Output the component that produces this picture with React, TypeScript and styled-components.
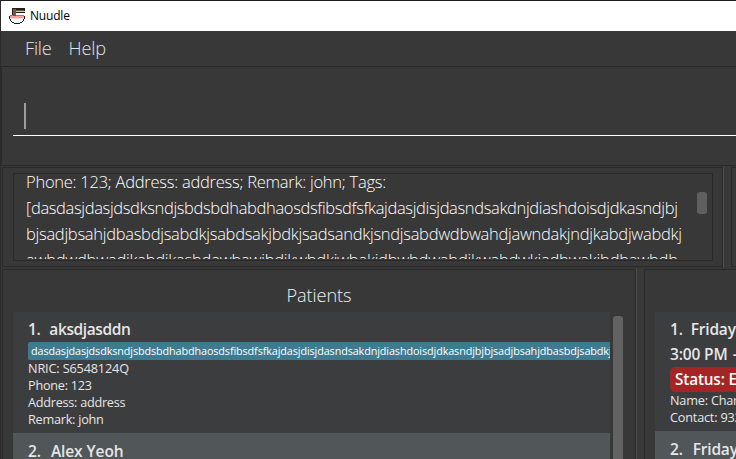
import React from 'react';
import styled, { createGlobalStyle } from 'styled-components';

const GlobalStyle = createGlobalStyle`
  * { box-sizing: border-box; }
  body {
    margin: 0;
    overflow: hidden;
    background: #383838;
    font-family: "Open Sans", "Noto Sans", sans-serif;
  }
`;

const line = '#2a2a2a';

const Window = styled.div`
  width: 736px;
  height: 459px;
  display: flex;
  flex-direction: column;
  overflow: hidden;
  background: #383838;
  border-top: 1px solid #1f1f1f;
  border-left: 1px solid #2b2b2b;
  white-space: nowrap;
`;

const TitleBar = styled.header`
  flex: none;
  height: 30px;
  display: flex;
  align-items: center;
  gap: 5px;
  padding-left: 8px;
  background: #fff;
  color: #000;
  font-size: 12px;
  line-height: 30px;
  letter-spacing: -0.2px;
`;

const MenuBar = styled.nav`
  flex: none;
  height: 35px;
  display: flex;
  gap: 17px;
  padding-left: 24px;
  line-height: 34px;
  color: #e3e3e3;
  font-size: 18.2px;
  font-weight: 300;
`;

const MenuItem = styled.span<{ $spacing: number }>`
  letter-spacing: ${p => p.$spacing}px;
`;

const CommandPane = styled.section`
  flex: none;
  height: 100px;
  margin-right: -2px;
  padding: 36px 0 0 11px;
  border: 1px solid ${line};
`;

const CommandField = styled.div`
  height: 33px;
  padding-left: 11px;
  border-bottom: 1px solid #fff;
`;

const Caret = styled.div`
  width: 2px;
  height: 26px;
  background: #9e9e9e;
`;

const Split = styled.div<{ $height: number; $left: number; $gap: number; $top: number }>`
  flex: none;
  display: grid;
  grid-template-columns: ${p => p.$left}px 1fr;
  column-gap: ${p => p.$gap}px;
  height: ${p => p.$height}px;
  margin: ${p => p.$top}px -2px 0 1px;
`;

const Pane = styled.section`
  min-width: 0;
  overflow: hidden;
  border: 1px solid ${line};
`;

const DividedPane = styled(Pane)`
  overflow: visible;
  box-shadow: 1px 0 0 #505050;
`;

const ResultPane = styled(DividedPane)`
  padding: 5px 9px 5px 10px;
`;

const ResultBox = styled.div`
  height: 88px;
  display: flex;
  justify-content: space-between;
  padding: 0 5px 1px 12px;
  border: 1px solid ${line};
`;

const ResultText = styled.div`
  height: 85px;
  overflow: hidden;
  color: #fff;
  font-size: 16.5px;
  font-weight: 300;
  line-height: 26px;
`;

const ResultLine = styled.div<{ $spacing: number }>`
  height: 26px;
  letter-spacing: ${p => p.$spacing}px;
  &:first-child { margin-top: -5px; }
`;

const Thumb = styled.div<{ $top: number; $height: number; $color: string }>`
  flex: none;
  width: 10px;
  height: ${p => p.$height}px;
  margin-top: ${p => p.$top}px;
  border-radius: 3px;
  background: ${p => p.$color};
`;

const Heading = styled.h2`
  height: 42px;
  margin: 0;
  color: #f0f0f0;
  font-size: 18.2px;
  font-weight: 300;
  line-height: 51px;
  letter-spacing: -0.1px;
  text-align: center;
`;

const ListArea = styled.div`
  display: flex;
  gap: 3px;
  padding-left: 10px;
`;

const List = styled.div<{ $width: number }>`
  flex: none;
  width: ${p => p.$width}px;
  height: 160px;
  overflow: hidden;
`;

const Cell = styled.article<{ $alt?: boolean; $height: number }>`
  height: ${p => p.$height}px;
  overflow: hidden;
  padding: 6px 0 0 15px;
  background: ${p => (p.$alt ? '#515658' : '#3c3d3f')};
  color: #e6e6e6;
`;

const Name = styled.div<{ $spacing: number; $gap: number; $leading?: number }>`
  display: flex;
  gap: ${p => p.$gap}px;
  height: 24px;
  font-size: 15.5px;
  font-weight: 600;
  line-height: ${p => p.$leading ?? 24}px;
  letter-spacing: ${p => p.$spacing}px;
`;

const Tag = styled.div`
  width: 720px;
  height: 18px;
  padding-left: 3px;
  border-radius: 2px;
  background: #3e7b91;
  color: #fff;
  font-size: 10.8px;
  line-height: 18px;
  letter-spacing: -0.1px;
`;

const Status = styled.div`
  width: 160px;
  height: 25px;
  margin-top: 1px;
  padding-left: 5px;
  border-radius: 5px;
  background: #a52525;
  color: #fff;
  font-size: 15.3px;
  font-weight: 600;
  line-height: 25px;
  letter-spacing: -0.15px;
`;

const Detail = styled.div<{ $spacing: number }>`
  height: 17px;
  font-size: 12.7px;
  line-height: 17px;
  letter-spacing: ${p => p.$spacing}px;
`;

const NoodleIcon = () => (
  <svg width="16" height="16" viewBox="0 0 16 16" shapeRendering="crispEdges">
    <path d="M3 0h13v5H7v3H3z" fill="#241c15" />
    <path d="M4 1h3v7H4zM7 2h8v1H7z" fill="#705c3d" />
    <path d="M7 3h9v1H7z" fill="#cfc8bd" />
    <path d="M1 7h14v1h1v3h-1v2h-1v1h-1v1h-2v1H5v-1H3v-1H2v-1H1v-2H0V8h1z" fill="#1a1a1a" />
    <path d="M1 8h14v3h-1v2h-1v1h-2v1H5v-1H3v-1H2v-2H1z" fill="#fff" />
    <path d="M1 7h14v1H1z" fill="#85827e" />
    <path d="M1 8h14v2H1z" fill="#f2a3a0" />
    <path d="M2 10h12v1H2z" fill="#fbd5d3" />
    <path d="M4 7h3v1H4z" fill="#705c3d" />
  </svg>
);

const resultLines: [string, number][] = [
  ['Phone: 123; Address: address; Remark: john; Tags:', -0.25],
  ['[dasdasjdasjdsdksndjsbdsbdhabdhaosdsfibsdfsfkajdasjdisjdasndsakdnjdiashdoisdjdkasndjbj', -0.35],
  ['bjsadjbsahjdbasbdjsabdkjsabdsakjbdkjsadsandkjsndjsabdwdbwahdjawndakjndjkabdjwabdkj', -0.28],
  ['awbdwdbwadjkabdjkasbdawbawjbdjkwbdkjwbakjdbwbdwabdjkwabdwkjadbwakjbdbawbdb', -0.24],
];

const details: [string, number][] = [
  ['NRIC: S6548124Q', -0.15],
  ['Phone: 123', -0.25],
  ['Address: address', -0.27],
  ['Remark: john', -0.25],
];

const tagText =
  'dasdasjdasjdsdksndjsbdsbdhabdhaosdsfibsdfsfkajdasjdisjdasndsakdnjdiashdoisdjdkasndjbjbjsadjbsahjdbasbdjsabdkjsabdsakjbdkjsad';

export default function App() {
  return (
    <>
      <GlobalStyle />
      <Window>
        <TitleBar>
          <NoodleIcon />
          <span>Nuudle</span>
        </TitleBar>
        <MenuBar>
          <MenuItem $spacing={-0.2}>File</MenuItem>
          <MenuItem $spacing={-0.2}>Help</MenuItem>
        </MenuBar>
        <CommandPane>
          <CommandField>
            <Caret />
          </CommandField>
        </CommandPane>
        <Split $height={100} $left={721} $gap={8} $top={1}>
          <ResultPane>
            <ResultBox>
              <ResultText>
                {resultLines.map(([text, spacing]) => (
                  <ResultLine key={text} $spacing={spacing}>{text}</ResultLine>
                ))}
              </ResultText>
              <Thumb $top={18} $height={22} $color="#5f5f5f" />
            </ResultBox>
          </ResultPane>
          <Pane />
        </Split>
        <Split $height={200} $left={634} $gap={8} $top={2}>
          <DividedPane>
            <Heading>Patients</Heading>
            <ListArea>
              <List $width={597}>
                <Cell $height={121}>
                  <Name $spacing={-0.4} $gap={9} $leading={23}>
                    <span>1.</span>
                    <span>aksdjasddn</span>
                  </Name>
                  <Tag>{tagText}</Tag>
                  {details.map(([text, spacing]) => (
                    <Detail key={text} $spacing={spacing}>{text}</Detail>
                  ))}
                </Cell>
                <Cell $alt $height={60}>
                  <Name $spacing={-0.1} $gap={10}>
                    <span>2.</span>
                    <span>Alex Yeoh</span>
                  </Name>
                </Cell>
              </List>
              <Thumb $top={4} $height={170} $color="#626262" />
            </ListArea>
          </DividedPane>
          <Pane>
            <Heading />
            <ListArea>
              <List $width={200}>
                <Cell $height={119}>
                  <Name $spacing={-0.2} $gap={8} $leading={23}>
                    <span>1.</span>
                    <span>Friday, 01</span>
                  </Name>
                  <Name $spacing={-0.15} $gap={5}>
                    <span>3:00 PM</span>
                    <span>-</span>
                  </Name>
                  <Status>Status: Expired</Status>
                  <Detail $spacing={-0.2}>Name: Charlotte</Detail>
                  <Detail $spacing={-0.2}>Contact: 93210283</Detail>
                </Cell>
                <Cell $alt $height={60}>
                  <Name $spacing={-0.2} $gap={10}>
                    <span>2.</span>
                    <span>Friday, 01</span>
                  </Name>
                </Cell>
              </List>
            </ListArea>
          </Pane>
        </Split>
      </Window>
    </>
  );
}
